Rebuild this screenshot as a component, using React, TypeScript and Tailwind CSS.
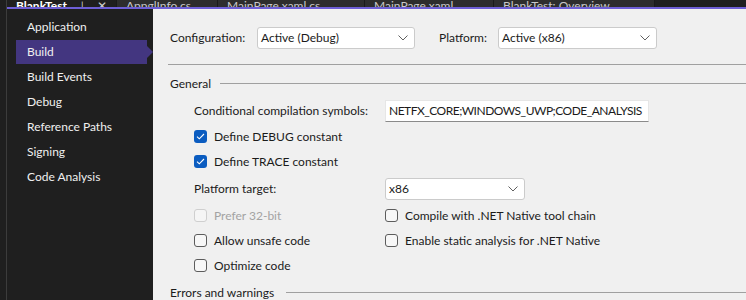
import React from 'react';

const FONT = { fontFamily: 'Lato, "Liberation Sans", Arial, sans-serif' };

const NAV = ['Application', 'Build', 'Build Events', 'Debug', 'Reference Paths', 'Signing', 'Code Analysis'];

const TABS = [
  { label: 'BlankTest', w: 'w-[110px]', active: true },
  { label: 'AppglInfo.cs', w: 'w-[101px]' },
  { label: 'MainPage.xaml.cs', w: 'w-[147px]' },
  { label: 'MainPage.xaml', w: 'w-[129px]' },
  { label: 'BlankTest: Overview', w: 'w-[161px]' },
];

function Chevron() {
  return (
    <svg width="10" height="6" viewBox="0 0 10 6" className="shrink-0">
      <path d="M0.5 0.5 L5 5 L9.5 0.5" fill="none" stroke="#606060" strokeWidth="1" />
    </svg>
  );
}

function Select({ value, className }: { value: string; className: string }) {
  return (
    <div
      className={`flex h-[22px] items-center justify-between rounded-[3px] border border-[#cbcbcb] bg-white pl-[3px] pr-[6px] ${className}`}
    >
      <span>{value}</span>
      <Chevron />
    </div>
  );
}

function Check({ label, checked, disabled }: { label: string; checked?: boolean; disabled?: boolean }) {
  return (
    <div className="flex h-[25px] items-center gap-[7px]">
      {checked ? (
        <span className="flex h-[13px] w-[13px] items-center justify-center rounded-[3px] bg-[#0b5cc0]">
          <svg width="9" height="7" viewBox="0 0 9 7">
            <path d="M1 3.6 L3.3 5.8 L8 1" fill="none" stroke="#ffffff" strokeWidth="1.1" />
          </svg>
        </span>
      ) : (
        <span
          className={`h-[13px] w-[13px] rounded-[3px] border ${
            disabled ? 'border-[#cfcfcf] bg-[#f5f5f5]' : 'border-[#5c5c5c] bg-[#f7f7f7]'
          }`}
        />
      )}
      <span className={disabled ? 'text-[#a3a3a3]' : 'text-[#1b1b1b]'}>{label}</span>
    </div>
  );
}

export default function App() {
  return (
    <div className="flex h-[300px] w-[746px] overflow-hidden bg-[#1f1f1f] text-[12px]" style={FONT}>
      {/* left gutter */}
      <div className="w-[7px] shrink-0 border-r border-[#3c3c3c] bg-[#1f1f1f]" />

      <div className="flex min-w-0 flex-1 flex-col">
        {/* document tabs, mostly scrolled out of view */}
        <div className="flex h-[7px] shrink-0 overflow-hidden bg-[#1f1f1f]">
          {TABS.map((t) => (
            <div
              key={t.label}
              className={`flex shrink-0 items-end justify-between overflow-hidden border-r border-[#1a1a1a] px-[9px] ${t.w} ${
                t.active ? 'bg-[#1f1f1f] font-bold text-white' : 'bg-[#2d2d2d] text-[#c8c8c8]'
              }`}
            >
              <span className="-mb-[5px] whitespace-nowrap leading-none">{t.label}</span>
              {t.active ? (
                <span className="-mb-[5px] flex gap-[10px] leading-none font-normal text-[#d0d0d0]">
                  <span>⊥</span>
                  <span>✕</span>
                </span>
              ) : null}
            </div>
          ))}
        </div>
        <div className="h-[2px] shrink-0 bg-[#6e5fd6]" />

        <div className="flex min-h-0 flex-1">
          {/* property page nav */}
          <nav className="w-[146px] shrink-0 bg-[#1f1f1f] pt-[5px] text-[#f0f0f0]">
            {NAV.map((n) =>
              n === 'Build' ? (
                <div key={n} className="relative my-[0.5px] ml-[9px] flex h-[24px] w-[131px] items-center bg-[#433680] pl-[11px]">
                  {n}
                  <span className="absolute right-[-6px] top-[6px] h-0 w-0 border-y-[6px] border-l-[6px] border-y-transparent border-l-[#433680]" />
                </div>
              ) : (
                <div key={n} className="flex h-[25px] items-center pl-[20px]">
                  {n}
                </div>
              )
            )}
          </nav>

          {/* property page content */}
          <main className="min-w-0 flex-1 bg-[#f0f0f0] pl-[15px] text-[#1b1b1b]">
            <div className="mt-[18px] flex h-[22px] items-center pl-[2px]">
              <span className="w-[87px]">Configuration:</span>
              <Select value="Active (Debug)" className="w-[158px]" />
              <span className="ml-[24px] w-[59px]">Platform:</span>
              <Select value="Active (x86)" className="w-[159px]" />
            </div>

            <div className="mt-[15px] h-px bg-[#a0a0a0]" />

            <div className="mt-[9px] flex h-[19px] items-center pl-[2px]">
              <span>General</span>
              <div className="ml-[9px] h-px flex-1 bg-[#a0a0a0]" />
            </div>

            <div className="pl-[26px]">
              <div className="mt-[7px] flex h-[22px] items-center">
                <span className="w-[191px]">Conditional compilation symbols:</span>
                <div className="flex h-[22px] w-[264px] items-center border border-[#e6e6e6] border-b-[#8a8a8a] bg-white pl-[3px] tracking-[-0.5px]">
                  NETFX_CORE;WINDOWS_UWP;CODE_ANALYSIS
                </div>
              </div>

              <div className="mt-[2px]">
                <Check label="Define DEBUG constant" checked />
                <Check label="Define TRACE constant" checked />
              </div>

              <div className="mt-[4px] flex h-[22px] items-center">
                <span className="w-[191px]">Platform target:</span>
                <Select value="x86" className="w-[140px]" />
              </div>

              <div className="mt-[3px] grid grid-cols-[191px_1fr]">
                <Check label="Prefer 32-bit" disabled />
                <Check label="Compile with .NET Native tool chain" />
                <Check label="Allow unsafe code" />
                <Check label="Enable static analysis for .NET Native" />
                <Check label="Optimize code" />
              </div>
            </div>

            <div className="mt-[6px] flex h-[17px] items-center pl-[2px]">
              <span>Errors and warnings</span>
              <div className="ml-[12px] h-px flex-1 bg-[#a0a0a0]" />
            </div>
          </main>
        </div>
      </div>
    </div>
  );
}
